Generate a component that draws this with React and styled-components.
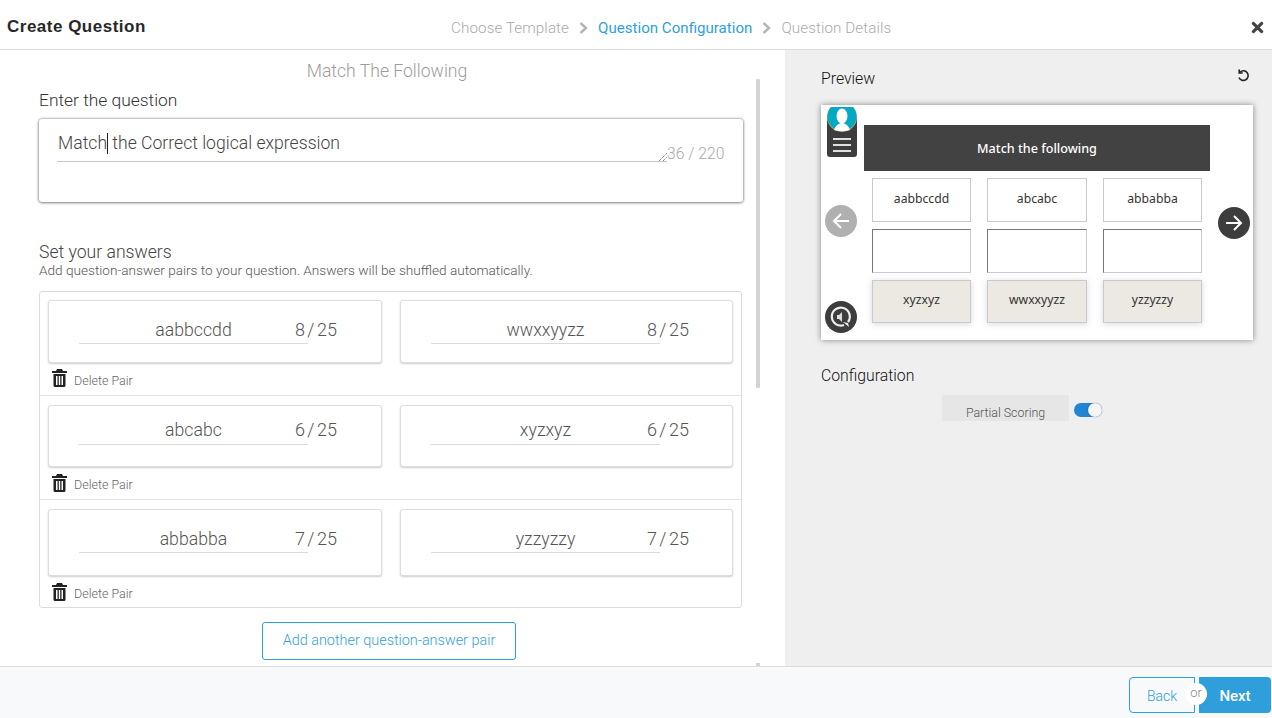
import styled, { createGlobalStyle } from 'styled-components';
import { FaTimes } from 'react-icons/fa';

const GlobalStyle = createGlobalStyle`
  html, body {
    margin: 0;
    padding: 0;
    height: 100%;
    overflow: hidden;
    background: #fff;
    font-family: "Roboto", "Liberation Sans", Arial, sans-serif;
    font-weight: 300;
  }
  * { box-sizing: border-box; }
`;

const Page = styled.div`
  width: 1272px;
  height: 718px;
  display: flex;
  flex-direction: column;
  overflow: hidden;
`;

const Header = styled.header`
  height: 50px;
  flex: none;
  display: flex;
  align-items: center;
  justify-content: space-between;
  padding: 5px 7px 0;
  border-bottom: 1px solid #dcdcdc;
  position: relative;
`;

const Title = styled.h1`
  margin: 0;
  font: bold 17px "Liberation Sans", Arial, sans-serif;
  letter-spacing: 0.5px;
  color: #282828;
`;

const Steps = styled.nav`
  position: absolute;
  left: 451px;
  top: 19px;
  display: flex;
  align-items: center;
  font-size: 15.2px;
  line-height: 18px;
`;

const Step = styled.span`
  color: ${props => (props.active ? '#2f9fdc' : '#aaa')};
  font-weight: ${props => (props.active ? 400 : 300)};
  font-size: ${props => (props.active ? 15.1 : 15.2)}px;
  letter-spacing: ${props => (props.active ? 0 : 0.1)}px;
`;

const Chevron = styled.svg`
  width: 9px;
  height: 12px;
  margin: 0 10px;
  fill: none;
  stroke: #b5b5b5;
  stroke-width: 2.4;
`;

const CloseIcon = styled(FaTimes)`
  width: 15px;
  height: 17px;
  color: #444;
`;

const Main = styled.main`
  flex: 1;
  min-height: 0;
  display: flex;
`;

const LeftPane = styled.section`
  width: 785px;
  flex: none;
  padding: 11px 43px 0 39px;
  position: relative;
  overflow: hidden;
`;

const ThumbLarge = styled.div`
  position: absolute;
  left: 756px;
  top: 29px;
  width: 4px;
  height: 309px;
  background: #d4d4d4;
  border-radius: 1px;
`;

const ThumbSmall = styled.div`
  position: absolute;
  left: 756px;
  top: 613px;
  width: 4px;
  height: 4px;
  background: #d4d4d4;
`;

const TemplateName = styled.h2`
  margin: 0;
  height: 20px;
  font-size: 17.6px;
  font-weight: 300;
  line-height: 20px;
  color: #9c9c9c;
  text-align: center;
  padding-right: 7px;
`;

const FieldLabel = styled.div`
  height: 20px;
  margin-top: 9px;
  font-size: 17.4px;
  line-height: 20px;
  color: #333;
`;

const QuestionCard = styled.div`
  width: 704px;
  height: 83px;
  margin-top: 9px;
  padding: 13px 18px 0;
  background: #fff;
  border-radius: 3px;
  box-shadow: 0 0 3px rgba(0, 0, 0, 0.5), 0 1px 3px rgba(0, 0, 0, 0.3);
  display: flex;
  align-items: flex-start;
`;

const QuestionInput = styled.div`
  width: 610px;
  height: 30px;
  border-bottom: 1px solid #c9c5c5;
  font-size: 17.6px;
  line-height: 22px;
  color: #444;
  padding-left: 1px;
  position: relative;
`;

const Caret = styled.span`
  display: inline-block;
  width: 1px;
  height: 21px;
  background: #222;
  vertical-align: -5px;
`;

const ResizeHandle = styled.svg`
  position: absolute;
  right: 0;
  bottom: 0;
  width: 9px;
  height: 9px;
  stroke: #555;
  stroke-width: 1;
`;

const QuestionCount = styled.span`
  margin-top: 12px;
  font-size: 15.7px;
  line-height: 20px;
  color: #a8a8a8;
  white-space: nowrap;
`;

const SectionTitle = styled.div`
  margin-top: 40px;
  font-size: 17.6px;
  line-height: 20px;
  color: #444;
`;

const SectionHint = styled.div`
  font-size: 13.6px;
  line-height: 16px;
  color: #555;
`;

const PairList = styled.div`
  width: 703px;
  margin-top: 13px;
  border: 1px solid #dcdcdc;
  border-radius: 3px;
`;

const PairRow = styled.div`
  padding: ${props => props.$top}px 8px 0;
  height: ${props => props.$height}px;
  border-bottom: ${props => (props.$last ? 'none' : '1px solid #e4e4e4')};
`;

const PairCards = styled.div`
  display: flex;
  gap: 18px;
`;

const PairCard = styled.div`
  height: ${props => props.$height}px;
  background: #fff;
  border: 1px solid #dedcdc;
  border-radius: 3px;
  box-shadow: 0 1px 2px rgba(0, 0, 0, 0.2);
  display: flex;
  align-items: flex-start;
  padding: ${props => props.$pad}px 0 0 30px;
  width: ${props => props.$width}px;
`;

const PairInput = styled.div`
  width: 229px;
  height: ${props => props.$lineAt}px;
  border-bottom: 1px solid #e3d6d6;
  text-align: center;
  font-size: 17.7px;
  line-height: 24px;
  color: #555;
`;

const PairCount = styled.span`
  margin-left: -13px;
  font-size: 18px;
  line-height: 24px;
  word-spacing: -2px;
  color: #555;
  white-space: nowrap;
`;

const DeleteRow = styled.div`
  height: 20px;
  margin-top: ${props => props.$gap}px;
  padding-left: 4px;
  display: flex;
  align-items: center;
  gap: 7px;
  font-size: 12.5px;
  color: #666;
`;

const TrashIcon = styled.svg`
  width: 15px;
  height: 18px;
  flex: none;
  margin-top: -4px;
  fill: #222;
`;

const AddRow = styled.div`
  display: flex;
  justify-content: center;
  width: 703px;
  margin-top: 14px;
  padding-right: 3px;
`;

const AddButton = styled.button`
  width: 254px;
  height: 38px;
  padding: 0 0 2px;
  background: #fff;
  border: 1px solid #2f9fdc;
  border-radius: 3px;
  font: inherit;
  font-size: 14.4px;
  color: #2f9fdc;
`;

const RightPane = styled.aside`
  flex: 1;
  background: #efefef;
  padding: 18px 19px 0 36px;
`;

const PaneHead = styled.div`
  display: flex;
  justify-content: space-between;
  align-items: center;
  height: 20px;
  font-size: 15.8px;
  font-weight: 300;
  color: #111;
`;

const UndoIcon = styled.svg`
  width: 13px;
  height: 13px;
  margin-top: -5px;
  margin-right: 3px;
  fill: none;
  stroke: #222;
  stroke-width: 1.6;
`;

const PreviewCard = styled.div`
  width: 432px;
  height: 235px;
  margin-top: 17px;
  background: #fff;
  box-shadow: 0 0 6px rgba(0, 0, 0, 0.45);
  display: grid;
  grid-template-columns: 43px 346px 43px;
  font-family: "Noto Sans", "Open Sans", sans-serif;
  font-weight: 400;
`;

const PreviewSide = styled.div`
  display: flex;
  flex-direction: column;
  align-items: center;
  justify-content: ${props => (props.$left ? 'flex-start' : 'center')};
  padding-top: ${props => (props.$left ? 2 : 0)}px;
`;

const MenuBadge = styled.div`
  width: 30px;
  height: 50px;
  margin-left: -1px;
  background: linear-gradient(transparent 10px, #3d3d3d 10px);
  border-radius: 0 0 3px 3px;
  overflow: hidden;
  display: flex;
  flex-direction: column;
  align-items: center;
  gap: 4px;
`;

const AvatarSvg = styled.svg`
  width: 30px;
  height: 25px;
  flex: none;
  margin-bottom: 2px;
`;

const MenuLine = styled.span`
  width: 18px;
  height: 2px;
  background: #e0e0e0;
  flex: none;
`;

const RoundButton = styled.div`
  width: 32px;
  height: 32px;
  border-radius: 50%;
  background: ${props => (props.$disabled ? '#b0b0b0' : '#3d3d3d')};
  display: flex;
  align-items: center;
  justify-content: center;
  margin-top: ${props => props.$top || 0}px;
  margin-left: ${props => props.$shift || 0}px;
`;

const ArrowSvg = styled.svg`
  width: 20px;
  height: 20px;
  fill: none;
  stroke: #fff;
  stroke-width: 2;
`;

const PreviewCenter = styled.div`
  padding-top: 20px;
`;

const PreviewTitle = styled.div`
  height: 46px;
  background: #424242;
  color: #fff;
  display: flex;
  align-items: center;
  justify-content: center;
  font-size: 12.6px;
  font-weight: 500;
`;

const PreviewGrid = styled.div`
  display: grid;
  grid-template-columns: 99px 100px 99px;
  column-gap: 16px;
  row-gap: 7px;
  padding: 7px 0 0 8px;
`;

const PreviewCell = styled.div`
  height: ${props => (props.$tile ? 43 : 44)}px;
  background: ${props => (props.$tile ? '#ece9e3' : '#fff')};
  border: 1px solid #c9c9cf;
  border-top-color: ${props => (props.$slot ? '#777' : '#c9c9cf')};
  border-left-color: ${props => (props.$slot ? '#777' : '#c9c9cf')};
  box-shadow: ${props => (props.$tile ? '0 1px 6px rgba(90, 100, 130, 0.25)' : 'none')};
  display: flex;
  align-items: center;
  justify-content: center;
  font-size: 12.2px;
  color: #333;
  padding-bottom: ${props => (props.$tile ? 5 : 4)}px;
`;

const ConfigTitle = styled(PaneHead)`
  margin-top: 25px;
`;

const ScoringRow = styled.div`
  display: flex;
  align-items: flex-start;
  margin-top: 10px;
  margin-left: 121px;
  gap: 5px;
`;

const ScoringLabel = styled.div`
  width: 127px;
  height: 26px;
  background: #e6e6e6;
  border-radius: 2px 2px 0 0;
  font-size: 12.4px;
  line-height: 35px;
  overflow: hidden;
  text-align: center;
  color: #555;
`;

const Toggle = styled.div`
  width: 28px;
  height: 14px;
  margin-top: 8px;
  border-radius: 7px;
  background: #2085d4;
  position: relative;
`;

const ToggleThumb = styled.span`
  position: absolute;
  right: 0;
  top: 0;
  width: 14px;
  height: 14px;
  border-radius: 50%;
  background: #f5f5f5;
  box-shadow: 0 0 2px rgba(0, 0, 0, 0.3);
`;

const Footer = styled.footer`
  height: 52px;
  flex: none;
  background: #f8f9fb;
  border-top: 1px solid #dcdcdc;
  display: flex;
  justify-content: flex-end;
  padding: 10px 1px 0 0;
  gap: 4px;
  position: relative;
`;

const BackButton = styled.button`
  width: 66px;
  height: 36px;
  padding: 1px 0 0;
  background: transparent;
  border: 1px solid #2f9fdc;
  border-radius: 4px 0 0 4px;
  font: inherit;
  font-size: 14px;
  color: #2f9fdc;
`;

const NextButton = styled.button`
  width: 72px;
  height: 36px;
  padding: 1px 0 0;
  background: #2f9fdc;
  border: none;
  border-radius: 0 4px 4px 0;
  font: inherit;
  font-size: 15px;
  font-weight: 500;
  color: #fff;
`;

const OrBadge = styled.span`
  position: absolute;
  left: 1185px;
  top: 16px;
  width: 22px;
  height: 22px;
  border-radius: 50%;
  background: #fff;
  color: #888;
  font-size: 13px;
  line-height: 20px;
  text-align: center;
`;

const pairs = [
  { left: 'aabbccdd', right: 'wwxxyyzz', count: 8, height: 103.5, top: 8, card: 63, pad: 17, lineAt: 26, gap: 7 },
  { left: 'abcabc', right: 'xyzxyz', count: 6, height: 104, top: 9, card: 62, pad: 12, lineAt: 27, gap: 8 },
  { left: 'abbabba', right: 'yzzyzzy', count: 7, height: 107.5, top: 9, card: 67, pad: 17, lineAt: 26, gap: 8 },
];

const cols = [
  { top: 'aabbccdd', bottom: 'xyzxyz' },
  { top: 'abcabc', bottom: 'wwxxyyzz' },
  { top: 'abbabba', bottom: 'yzzyzzy' },
];

const Trash = () => (
  <TrashIcon viewBox="0 0 15 18">
    <path d="M5 0h5l1 2h4v2H0V2h4zM1.500 5h12v11.500a1.500 1.500 0 0 1-1.500 1.500H3a1.500 1.500 0 0 1-1.500-1.500zM4 7v9h1.500V7zm2.800 0v9h1.400V7zm2.700 0v9H11V7z" fillRule="evenodd" />
  </TrashIcon>
);

const App = () => {
  return (
    <Page>
      <GlobalStyle />
      <Header>
        <Title>Create Question</Title>
        <Steps>
          <Step>Choose Template</Step>
          <Chevron viewBox="0 0 9 12"><polyline points="1.500,1 7,6 1.500,11" /></Chevron>
          <Step active>Question Configuration</Step>
          <Chevron viewBox="0 0 9 12"><polyline points="1.500,1 7,6 1.500,11" /></Chevron>
          <Step>Question Details</Step>
        </Steps>
        <CloseIcon />
      </Header>
      <Main>
        <LeftPane>
          <ThumbLarge />
          <ThumbSmall />
          <TemplateName>Match The Following</TemplateName>
          <FieldLabel>Enter the question</FieldLabel>
          <QuestionCard>
            <QuestionInput>
              Match<Caret /> the Correct logical expression
              <ResizeHandle viewBox="0 0 9 9">
                <line x1="1" y1="9" x2="9" y2="1" strokeDasharray="1 1" />
                <line x1="5" y1="9" x2="9" y2="5" strokeDasharray="1 1" />
              </ResizeHandle>
            </QuestionInput>
            <QuestionCount>36 / 220</QuestionCount>
          </QuestionCard>
          <SectionTitle>Set your answers</SectionTitle>
          <SectionHint>Add question-answer pairs to your question. Answers will be shuffled automatically.</SectionHint>
          <PairList>
            {pairs.map((pair, i) => (
              <PairRow key={pair.left} $height={pair.height} $top={pair.top} $last={i === pairs.length - 1}>
                <PairCards>
                  <PairCard $height={pair.card} $pad={pair.pad} $width={334}>
                    <PairInput $lineAt={pair.lineAt}>{pair.left}</PairInput>
                    <PairCount>{pair.count} / 25</PairCount>
                  </PairCard>
                  <PairCard $height={pair.card} $pad={pair.pad} $width={333}>
                    <PairInput $lineAt={pair.lineAt}>{pair.right}</PairInput>
                    <PairCount>{pair.count} / 25</PairCount>
                  </PairCard>
                </PairCards>
                <DeleteRow $gap={pair.gap}><Trash />Delete Pair</DeleteRow>
              </PairRow>
            ))}
          </PairList>
          <AddRow>
            <AddButton>Add another question-answer pair</AddButton>
          </AddRow>
        </LeftPane>
        <RightPane>
          <PaneHead>
            Preview
            <UndoIcon viewBox="0 0 13 13">
              <path d="M3 3.200A4.800 4.800 0 1 1 2 8.500" />
              <path d="M2.200 0.500v3.500h3.500" />
            </UndoIcon>
          </PaneHead>
          <PreviewCard>
            <PreviewSide $left>
              <MenuBadge>
                <AvatarSvg viewBox="0 0 30 25">
                  <circle cx="15" cy="10" r="15" fill="#bfa96a" />
                  <circle cx="15" cy="9.500" r="14.500" fill="#04a9c5" />
                  <ellipse cx="15" cy="9" rx="5.500" ry="7.500" fill="#fff" />
                  <path d="M7 23c2-5 5-7 8-7s6 2 8 7c-4 1.500-12 1.500-16 0z" fill="#fff" />
                </AvatarSvg>
                <MenuLine />
                <MenuLine />
                <MenuLine />
              </MenuBadge>
              <RoundButton $disabled $top={48} $shift={-4}>
                <ArrowSvg viewBox="0 0 20 20">
                  <path d="M18 10H3M10 3l-7 7 7 7" />
                </ArrowSvg>
              </RoundButton>
              <RoundButton $top={64} $shift={-4}>
                <svg width="24" height="24" viewBox="0 0 24 24" fill="none">
                  <path d="M19 17a9 9 0 1 0-4 3" stroke="#eee" strokeWidth="2.200" />
                  <path d="M14 17l5 1 1 4z" fill="#eee" />
                  <path d="M8 10h2l3-3v10l-3-3H8z" fill="#ddd" />
                </svg>
              </RoundButton>
            </PreviewSide>
            <PreviewCenter>
              <PreviewTitle>Match the following</PreviewTitle>
              <PreviewGrid>
                {cols.map(col => <PreviewCell key={col.top}>{col.top}</PreviewCell>)}
                {cols.map(col => <PreviewCell key={col.top} $slot />)}
                {cols.map(col => <PreviewCell key={col.top} $tile>{col.bottom}</PreviewCell>)}
              </PreviewGrid>
            </PreviewCenter>
            <PreviewSide>
              <RoundButton $shift={4}>
                <ArrowSvg viewBox="0 0 20 20">
                  <path d="M2 10h15M10 3l7 7-7 7" />
                </ArrowSvg>
              </RoundButton>
            </PreviewSide>
          </PreviewCard>
          <ConfigTitle>Configuration</ConfigTitle>
          <ScoringRow>
            <ScoringLabel>Partial Scoring</ScoringLabel>
            <Toggle><ToggleThumb /></Toggle>
          </ScoringRow>
        </RightPane>
      </Main>
      <Footer>
        <BackButton>Back</BackButton>
        <NextButton>Next</NextButton>
        <OrBadge>or</OrBadge>
      </Footer>
    </Page>
  );
};

export default App;
